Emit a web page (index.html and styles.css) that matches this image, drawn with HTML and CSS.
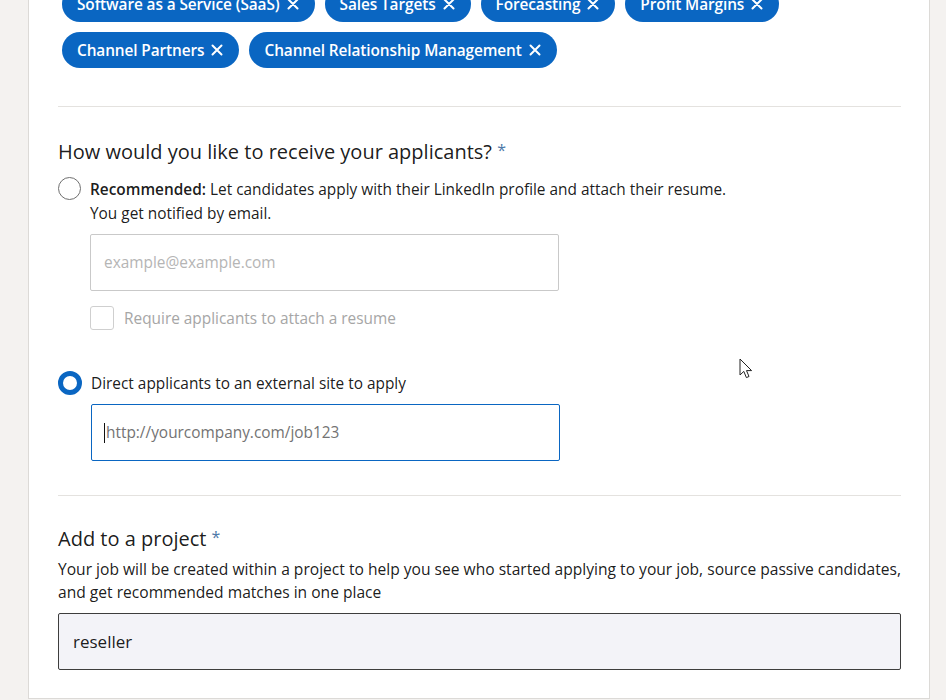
FILE: index.html
```html
<!DOCTYPE html>
<html lang="en">
<head>
<meta charset="utf-8">
<title>Job posting</title>
<link rel="stylesheet" href="styles.css">
</head>
<body>
<div class="page">
  <div class="card">
    <div class="chips">
      <span class="chip">Software as a Service (SaaS) <svg class="x" viewBox="0 0 12 12"><path d="M1.5 1.5 L10.5 10.5 M10.5 1.5 L1.5 10.5"/></svg></span>
      <span class="chip">Sales Targets <svg class="x" viewBox="0 0 12 12"><path d="M1.5 1.5 L10.5 10.5 M10.5 1.5 L1.5 10.5"/></svg></span>
      <span class="chip">Forecasting <svg class="x" viewBox="0 0 12 12"><path d="M1.5 1.5 L10.5 10.5 M10.5 1.5 L1.5 10.5"/></svg></span>
      <span class="chip">Profit Margins <svg class="x" viewBox="0 0 12 12"><path d="M1.5 1.5 L10.5 10.5 M10.5 1.5 L1.5 10.5"/></svg></span>
      <span class="chip">Channel Partners <svg class="x" viewBox="0 0 12 12"><path d="M1.5 1.5 L10.5 10.5 M10.5 1.5 L1.5 10.5"/></svg></span>
      <span class="chip">Channel Relationship Management <svg class="x" viewBox="0 0 12 12"><path d="M1.5 1.5 L10.5 10.5 M10.5 1.5 L1.5 10.5"/></svg></span>
    </div>

    <hr class="divider divider-first">

    <h2 class="section-title">How would you like to receive your applicants? <span class="req">*</span></h2>

    <div class="option">
      <span class="radio"></span>
      <div class="option-body">
        <p class="option-label"><strong>Recommended:</strong> Let candidates apply with their LinkedIn profile and attach their resume.<br>You get notified by email.</p>
        <div class="field field-disabled"><span class="placeholder light">example@example.com</span></div>
        <div class="check-row">
          <span class="checkbox"></span>
          <span class="check-label">Require applicants to attach a resume</span>
        </div>
      </div>
    </div>

    <div class="option option-second">
      <span class="radio radio-on"></span>
      <div class="option-body">
        <p class="option-label">Direct applicants to an external site to apply</p>
        <div class="field field-focus"><span class="caret"></span><span class="placeholder">http://yourcompany.com/job123</span></div>
      </div>
    </div>

    <hr class="divider divider-second">

    <h2 class="section-title second-title">Add to a project <span class="req">*</span></h2>
    <p class="desc">Your job will be created within a project to help you see who started applying to your job, source passive candidates, and get recommended matches in one place</p>
    <div class="select">reseller</div>
  </div>
</div>

<svg class="cursor" viewBox="0 0 14 22" width="14" height="22"><path d="M1 1 L1 17 L4.8 13.4 L7.4 19.6 L10 18.5 L7.5 12.6 L12.6 12.6 Z" fill="#fff" stroke="#222" stroke-width="1" stroke-linejoin="round"/></svg>
</body>
</html>
```

FILE: styles.css
```css
html, body {
  margin: 0;
  padding: 0;
  height: 100%;
  overflow: hidden;
}

body {
  background: #f4f2f0;
  font-family: "Open Sans", "Noto Sans", sans-serif;
  color: rgba(0, 0, 0, 0.9);
  position: relative;
}

.page {
  padding-left: 28px;
}

.card {
  width: 843px;
  margin-top: -47px;
  background: #fff;
  border: 1px solid #dcdad7;
  padding: 32px 28px 28px 29px;
}

.chips {
  display: flex;
  flex-wrap: wrap;
  gap: 10px;
  padding-left: 4px;
}

.chip {
  display: inline-flex;
  align-items: center;
  gap: 7px;
  height: 36px;
  padding: 0 16px 0 15px;
  border-radius: 18px;
  background: #0a66c2;
  color: #fff;
  font-size: 15.4px;
  font-weight: 600;
  letter-spacing: -0.1px;
  white-space: nowrap;
}

.x {
  width: 12px;
  height: 12px;
  fill: none;
  stroke: #fff;
  stroke-width: 2;
  stroke-linecap: round;
}

.divider {
  border: 0;
  height: 1px;
  background: #e4e2df;
  margin: 0;
}

.divider-first {
  margin-top: 38px;
}

.section-title {
  margin: 29px 0 0;
  font-size: 20px;
  line-height: 28px;
  font-weight: 400;
  color: rgba(0, 0, 0, 0.9);
}

.second-title {
  margin-top: 27px;
}

.req {
  color: #4d79a8;
  font-size: 16px;
  vertical-align: 3px;
}

.option {
  display: flex;
  gap: 9px;
  margin-top: 11px;
}

.option-second {
  margin-top: 41px;
}

.radio {
  flex: none;
  width: 21px;
  height: 21px;
  border: 1.5px solid #6f6f6f;
  border-radius: 50%;
}

.radio-on {
  width: 14px;
  height: 14px;
  border: 5px solid #0a66c2;
  background: #fff;
}

.option-body {
  flex: 1;
}

.option-label {
  margin: 0;
  padding-top: 1px;
  font-size: 15.4px;
  line-height: 24px;
  color: rgba(0, 0, 0, 0.9);
}

.option-label strong {
  font-weight: 600;
}

.field {
  box-sizing: border-box;
  width: 469px;
  height: 57px;
  margin-top: 8px;
  border: 1px solid #c9c9c9;
  border-radius: 2px;
  display: flex;
  align-items: center;
  padding-left: 13px;
}

.field-focus {
  border-color: #0a66c2;
  padding-left: 12px;
}

.placeholder {
  font-size: 15.4px;
  color: #737373;
}

.placeholder.light {
  color: #b5b5b5;
}

.caret {
  width: 1px;
  height: 20px;
  background: #111;
  margin-right: 1px;
}

.check-row {
  display: flex;
  align-items: center;
  gap: 10px;
  margin-top: 15px;
}

.checkbox {
  box-sizing: border-box;
  width: 24px;
  height: 24px;
  border: 1px solid #cfcfcf;
  border-radius: 3px;
}

.check-label {
  font-size: 15.4px;
  color: #a6a6a6;
}

.divider-second {
  margin-top: 34px;
}

.desc {
  margin: 5px 0 0;
  font-size: 15.6px;
  line-height: 23px;
  color: rgba(0, 0, 0, 0.9);
}

.select {
  box-sizing: border-box;
  height: 57px;
  margin-top: 9px;
  background: #f3f3f8;
  border: 1px solid #3d3d3d;
  border-radius: 2px;
  display: flex;
  align-items: center;
  padding-left: 14px;
  font-size: 17px;
  color: rgba(0, 0, 0, 0.9);
}

.cursor {
  position: absolute;
  left: 739px;
  top: 358px;
}
```
